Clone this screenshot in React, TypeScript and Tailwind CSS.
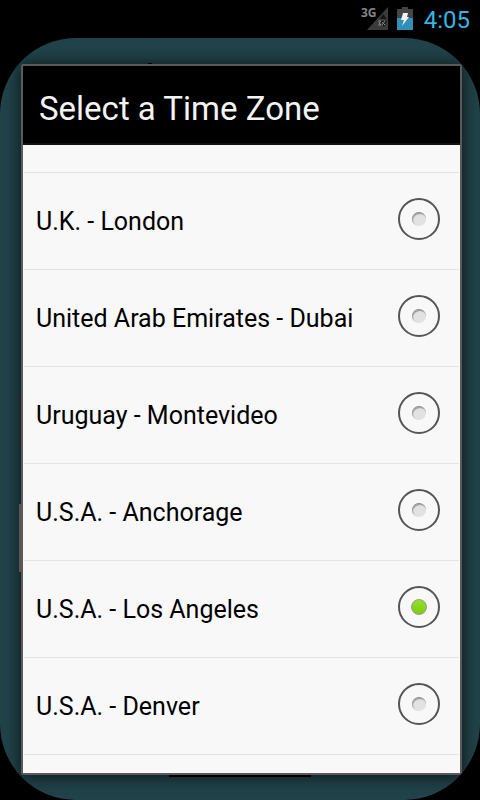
import { useState } from "react"

const zones = [
    "U.K. - London",
    "United Arab Emirates - Dubai",
    "Uruguay - Montevideo",
    "U.S.A. - Anchorage",
    "U.S.A. - Los Angeles",
    "U.S.A. - Denver",
]

function StatusBar() {
    return (
        <header className="flex h-[38px] items-center justify-end pr-[10px]">
            <svg width="30" height="28" viewBox="-2 -4 30 28" className="mr-[9px] mb-1 overflow-visible" role="img" aria-label="3G signal">
                <path d="M28 0V23H7Z" fill="#3b3b3b" />
                <path d="M23 7l4 5h-7zM24 20l-4-6h7z" fill="#161616" />
                <path d="M18 14h3l-2 2 2 2h-3M22 15l3 3m0-4l-3 4" stroke="#858585" strokeWidth="1" fill="none" />
                <text x="1" y="10" fontSize="12" fontWeight="700" fill="#858585" fontFamily="'Noto Sans', sans-serif">3G</text>
            </svg>
            <svg width="16" height="24" viewBox="0 0 16 24" className="mr-[11px]" role="img" aria-label="Battery charging">
                <path d="M5 0h6v2h5v9H0V2h5z" fill="#454545" />
                <path d="M0 11h16v12H0z" fill="#3290b8" />
                <path d="M6 6h5l-1 4h2l-7 9 2-6H4z" fill="#f2f2f2" />
            </svg>
            <time className="pt-0.5 text-[24px] leading-[28px] text-[#33b5e5]">4:05</time>
        </header>
    )
}

function ZoneRow({ name, checked, onSelect }: { name: string; checked: boolean; onSelect: () => void }) {
    return (
        <li className="border-t border-[#e4e4e4]">
            <label className="flex h-24 cursor-pointer items-center justify-between pl-3 pr-[19px]">
                <span className="pt-0.5 text-[25px] leading-8 text-black">{name}</span>
                <span className="grid pb-1">
                    <input
                        type="radio"
                        name="zone"
                        checked={checked}
                        onChange={onSelect}
                        className="peer col-start-1 row-start-1 size-[42px] appearance-none rounded-full border-2 border-[#555]"
                    />
                    <span className="pointer-events-none col-start-1 row-start-1 size-[14px] place-self-center rounded-full border-t border-[#888] bg-[#e2e2e2] shadow-[inset_1px_1px_1px_#999] peer-checked:size-4 peer-checked:border peer-checked:border-[#999] peer-checked:bg-linear-to-b peer-checked:from-[#93e024] peer-checked:to-[#7fcd12] peer-checked:shadow-none" />
                </span>
            </label>
        </li>
    )
}

function App() {
    const [zone, setZone] = useState("U.S.A. - Los Angeles")

    return (
        <div className="flex min-h-screen flex-col bg-black font-[Roboto,sans-serif]">
            <StatusBar />
            <main className="relative flex flex-1 flex-col overflow-hidden rounded-[76px] bg-[#204248] pt-[26px] pr-[18px] pb-[25px] pl-[21px]">
                {/* edges of the clock behind the dialog */}
                <div className="absolute top-[353px] left-[20px] h-[58px] w-2 bg-[#3a3838]" />
                <div className="absolute top-[466px] left-[19px] h-[68px] w-2 bg-[#8a7e7e]" />
                <div className="absolute top-[549px] left-[20px] h-[58px] w-2 bg-[#3a3838]" />
                <div className="absolute bottom-[23px] left-[169px] h-2 w-[142px] bg-black" />
                <div className="absolute top-[25px] left-[148px] h-2 w-1 bg-black" />

                <section
                    role="dialog"
                    aria-labelledby="title"
                    className="relative flex flex-1 flex-col rounded-[2px] border-2 border-[#5a5a5a] bg-[#f8f8f8] shadow-[0_1px_16px_#000b]"
                >
                    <h1 id="title" className="flex h-[79px] items-center border-b-2 border-[#111] bg-black px-4 pt-2 text-[33px] leading-10 text-[#f3f3f3]">
                        Select a Time Zone
                    </h1>
                    <ul className="mx-px flex-1 pt-[27px]">
                        {zones.map((name) => (
                            <ZoneRow key={name} name={name} checked={name === zone} onSelect={() => setZone(name)} />
                        ))}
                        <li className="border-t border-[#e4e4e4]" />
                    </ul>
                </section>
            </main>
        </div>
    )
}

export default App
